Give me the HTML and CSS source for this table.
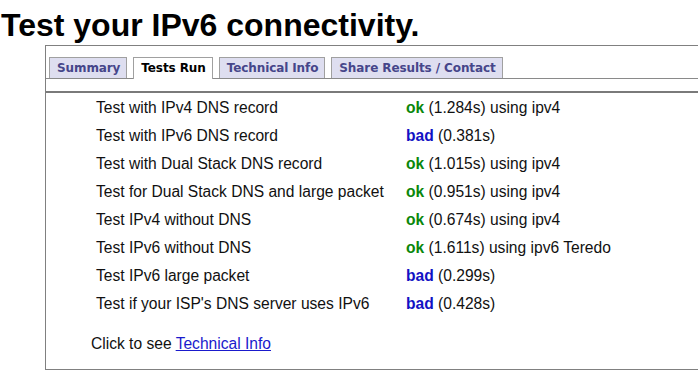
FILE: index.html
```html
<!DOCTYPE html>
<html>
<head>
<meta charset="utf-8">
<link rel="stylesheet" href="styles.css">
</head>
<body>
<h1 class="title">Test your IPv6 connectivity.</h1>
<div class="panel">
  <ul class="tabs">
    <li class="tab">Summary</li>
    <li class="tab active">Tests Run</li>
    <li class="tab">Technical Info</li>
    <li class="tab">Share Results / Contact</li>
  </ul>
  <div class="content">
    <div class="results">
      <div class="name">Test with IPv4 DNS record</div><div class="res"><b class="ok">ok</b> (1.284s) using ipv4</div>
      <div class="name">Test with IPv6 DNS record</div><div class="res"><b class="bad">bad</b> (0.381s)</div>
      <div class="name">Test with Dual Stack DNS record</div><div class="res"><b class="ok">ok</b> (1.015s) using ipv4</div>
      <div class="name">Test for Dual Stack DNS and large packet</div><div class="res"><b class="ok">ok</b> (0.951s) using ipv4</div>
      <div class="name">Test IPv4 without DNS</div><div class="res"><b class="ok">ok</b> (0.674s) using ipv4</div>
      <div class="name">Test IPv6 without DNS</div><div class="res"><b class="ok">ok</b> (1.611s) using ipv6 Teredo</div>
      <div class="name">Test IPv6 large packet</div><div class="res"><b class="bad">bad</b> (0.299s)</div>
      <div class="name">Test if your ISP's DNS server uses IPv6</div><div class="res"><b class="bad">bad</b> (0.428s)</div>
    </div>
    <p class="more">Click to see <a href="#" class="link">Technical Info</a></p>
  </div>
</div>
</body>
</html>
```
FILE: styles.css
```css
html, body {
  margin: 0;
  padding: 0;
  background: #fff;
}
body {
  font-family: "Liberation Sans", Arial, sans-serif;
  color: #000;
  overflow: hidden;
}
.title {
  margin: 0;
  padding: 7px 0 0 1px;
  font-family: "Liberation Sans", Arial, sans-serif;
  font-weight: bold;
  font-size: 32px;
  line-height: 37px;
  color: #000;
  white-space: nowrap;
}
.panel {
  margin: 1px 0 0 45px;
  width: 660px;
  border: 1px solid #808080;
  border-right: 0;
  padding-top: 11px;
}
.tabs {
  list-style: none;
  margin: 0;
  padding: 0 0 0 3px;
  display: flex;
  align-items: flex-end;
  gap: 6px;
  border-bottom: 1px solid #8a8a8a;
}
.tab {
  font-family: "DejaVu Sans", Verdana, sans-serif;
  font-weight: bold;
  font-size: 12px;
  letter-spacing: -0.1px;
  line-height: 20px;
  padding: 0 6px 0 7px;
  border: 1px solid #a0a0a0;
  border-bottom: 0;
  background: #dedef0;
  color: #46468a;
  white-space: nowrap;
}
.tab.active {
  background: #fff;
  color: #000;
  margin-bottom: -1px;
  padding-bottom: 1px;
}
.content {
  margin-top: 12px;
  border-top: 2px solid #7a7a7a;
  padding-bottom: 11px;
}
.results {
  display: grid;
  grid-template-columns: 310px auto;
  padding-left: 50px;
  padding-top: 1px;
  font-size: 15.6px;
  line-height: 28px;
  color: #111;
}
.name, .res {
  white-space: nowrap;
}
.ok {
  color: #0b870b;
}
.bad {
  color: #1212c4;
}
.more {
  margin: 12px 0 0 0;
  padding-left: 45px;
  font-size: 15.6px;
  line-height: 28px;
  color: #111;
}
.link {
  color: #1a1acc;
  text-decoration: underline;
}
```
